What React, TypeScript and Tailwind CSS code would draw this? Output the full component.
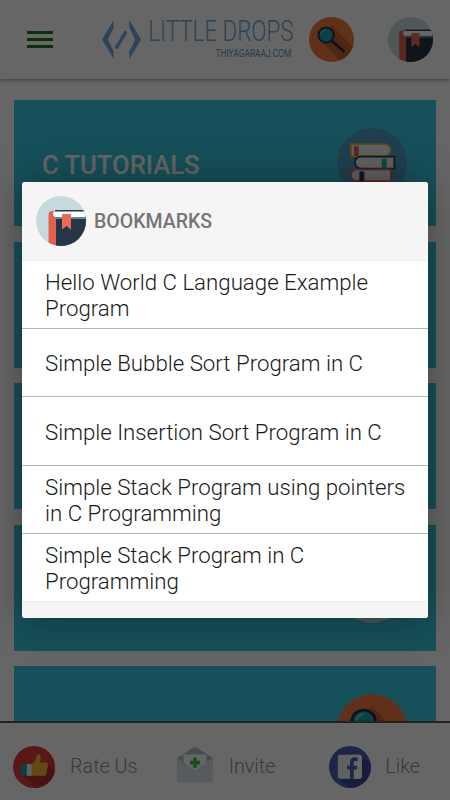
import React from "react";

const rows = [
  "Hello World C Language Example Program",
  "Simple Bubble Sort Program in C",
  "Simple Insertion Sort Program in C",
  "Simple Stack Program using pointers in C Programming",
  "Simple Stack Program in C Programming",
];

const BookIcon: React.FC<{ className?: string }> = ({ className }) => {
  const id = React.useId();
  return (
    <svg viewBox="0 0 100 100" className={className}>
      <clipPath id={id}>
        <circle cx="50" cy="50" r="50" />
      </clipPath>
      <g clipPath={`url(#${id})`}>
        <rect width="100" height="100" fill="#c5d9de" />
        <path d="M25 100V38a8 8 0 0 1 8-8h67v70z" fill="#e2604c" />
        <rect x="40" y="42" width="60" height="58" fill="#233746" />
        <path d="M40 42a6 6 0 0 1 0-12h60v12z" fill="#ffffff" />
        <rect x="38" y="28" width="62" height="3" fill="#233746" />
        <rect x="40" y="42" width="60" height="4" fill="#5b8ba0" />
        <path d="M52 36h18v31l-9-7-9 7z" fill="#ee6a55" />
      </g>
    </svg>
  );
};

const SearchIcon: React.FC<{ className?: string }> = ({ className }) => {
  const id = React.useId();
  return (
    <svg viewBox="0 0 100 100" className={className}>
      <clipPath id={id}>
        <circle cx="50" cy="50" r="50" />
      </clipPath>
      <g clipPath={`url(#${id})`}>
        <rect width="100" height="100" fill="#f07c3e" />
        <path d="M18 45 50 18 100 68V100H72z" fill="#c9602b" />
        <path d="M50 52 77 76" stroke="#1e2a5a" strokeWidth="6" strokeLinecap="round" />
        <circle cx="38" cy="40" r="17" fill="#1ba8a8" stroke="#1e2a5a" strokeWidth="4" />
        <path d="M27 40a11 11 0 0 1 11-11" fill="none" stroke="#7fd6d0" strokeWidth="2" />
      </g>
    </svg>
  );
};

const BooksIcon: React.FC<{ className?: string }> = ({ className }) => (
  <svg viewBox="0 0 100 100" className={className}>
    <circle cx="50" cy="50" r="50" fill="#4f9ec8" />
    <path d="M20 23h48a8 8 0 0 1 0 17H20z" fill="#f0f0f0" stroke="#e8b93c" strokeWidth="2.500" />
    <rect x="24" y="26" width="7" height="14" fill="#e2604c" />
    <path d="M82 41H34a8 8 0 0 0 0 17h48z" fill="#f0f0f0" stroke="#2a3a55" strokeWidth="2.500" />
    <rect x="64" y="44" width="7" height="14" fill="#2aa98f" />
    <path d="M77 59H28a8 8 0 0 0 0 17h49z" fill="#f0f0f0" stroke="#e2604c" strokeWidth="2.500" />
    <rect x="32" y="62" width="7" height="14" fill="#2a3a55" />
  </svg>
);

const ThumbIcon: React.FC<{ className?: string }> = ({ className }) => (
  <svg viewBox="0 0 100 100" className={className}>
    <circle cx="50" cy="50" r="50" fill="#e23b3b" />
    <path d="M50 95 18 68 84 40 100 60A50 50 0 0 1 50 100z" fill="#b82f2f" />
    <rect x="19" y="43" width="14" height="28" fill="#1ba0a8" />
    <rect x="33" y="43" width="12" height="28" fill="#f5f5f5" />
    <path d="M45 43c6-3 10-10 12-22 3-3 9-1 9 6 0 5-2 9-2 12h15c5 0 5 5 4 8l-4 20c-1 3-3 4-6 4H45z" fill="#f5b83d" />
  </svg>
);

const MailIcon: React.FC<{ className?: string }> = ({ className }) => (
  <svg viewBox="0 0 100 100" className={className}>
    <path d="M50 0 100 32V50H0V32z" fill="#a8c0cc" />
    <path d="M18 22H82V78H18z" fill="#ffffff" />
    <path d="M0 32 50 66 100 32V92a8 8 0 0 1-8 8H8a8 8 0 0 1-8-8z" fill="#d8e4ea" />
    <path d="M43 26h14v12h12v14H57v12H43V52H31V38h12z" fill="#3fbf3f" transform="translate(12.500 11) scale(.75)" />
  </svg>
);

const FacebookIcon: React.FC<{ className?: string }> = ({ className }) => {
  const id = React.useId();
  return (
    <svg viewBox="0 0 100 100" className={className}>
      <clipPath id={id}>
        <circle cx="50" cy="50" r="50" />
      </clipPath>
      <g clipPath={`url(#${id})`}>
        <rect width="100" height="100" fill="#4a5fb0" />
        <path d="M78 22 100 44V100H50L22 78z" fill="#3a4c96" />
        <rect x="21" y="21" width="57" height="57" rx="6" fill="#f2f2f2" />
        <rect x="50" y="21" width="28" height="57" rx="6" fill="#ffffff" />
        <path d="M50 78V56H43V47h7V39c0-8 4-12 11-12h7v9h-5c-3 0-4 1-4 4v7h9l-2 9h-7v22z" fill="#4a5fb0" />
      </g>
    </svg>
  );
};

const Logo: React.FC = () => (
  <div className="flex items-start">
    <svg viewBox="0 0 42 42" className="h-[41px] w-[41px] shrink-0">
      <path d="M13 1 1 21 13 41V33L7 21 13 9z" fill="#6fa8dc" />
      <path d="M29 1 41 21 29 41V33L35 21 29 9z" fill="#6fa8dc" />
      <path d="M16 29 25 14" stroke="#6fa8dc" strokeWidth="3.500" strokeLinecap="round" />
    </svg>
    <div className="ml-[8px] flex w-[143px] flex-col items-end -mt-[2px]">
      <span className="origin-right scale-x-[0.77] whitespace-nowrap text-[29px] font-light leading-[29px] text-[#6fa8dc]">
        LITTLE DROPS
      </span>
      <span className="mt-[2px] origin-right scale-x-[0.8] whitespace-nowrap pr-[2px] text-[10.500px] leading-[11px] text-[#5b8fbc]">
        THIYAGARAAJ.COM
      </span>
    </div>
  </div>
);

const Card: React.FC<{ title?: string; children: React.ReactNode }> = ({ title, children }) => (
  <div className="flex h-[126px] shrink-0 items-center justify-between bg-[#39c8e1] pl-[28px] pr-[29px]">
    <span className="pt-[4px] text-[25.600px] font-medium text-white">{title}</span>
    {children}
  </div>
);

const FooterItem: React.FC<{ label: string; className?: string; icon: React.ReactNode }> = ({ label, className, icon }) => (
  <div className={`flex items-center ${className ?? ""}`}>
    {icon}
    <span className="text-[19.800px] font-light text-[#8f8f8f]">{label}</span>
  </div>
);

export default function App() {
  return (
    <div className="relative flex h-[800px] w-[450px] flex-col overflow-hidden bg-white font-['Roboto',sans-serif]">
      <header className="z-10 flex h-[79px] shrink-0 items-center bg-white pl-[27px] shadow-[0_1px_4px_rgba(0,0,0,0.4)]">
        <div className="flex w-[26px] shrink-0 flex-col gap-[4px]">
          <div className="h-[3px] bg-[#1a7a1a]" />
          <div className="h-[3px] bg-[#1a7a1a]" />
          <div className="h-[3px] bg-[#1a7a1a]" />
        </div>
        <div className="ml-[48px] shrink-0">
          <Logo />
        </div>
        <SearchIcon className="ml-[16px] h-[45px] w-[45px] shrink-0" />
        <BookIcon className="ml-[34px] h-[45px] w-[45px] shrink-0" />
      </header>

      <main className="flex flex-1 flex-col gap-[15.500px] overflow-hidden px-[14px] pt-[21px]">
        <Card title="C TUTORIALS">
          <BooksIcon className="h-[70px] w-[70px]" />
        </Card>
        <Card>
          <div className="h-[70px] w-[70px] rounded-full bg-[#4f9ec8]" />
        </Card>
        <Card>
          <div className="h-[70px] w-[70px] rounded-full bg-[#4f9ec8]" />
        </Card>
        <Card>
          <div className="h-[70px] w-[70px] rounded-full bg-[#c5d9de]" />
        </Card>
        <Card>
          <SearchIcon className="h-[70px] w-[70px]" />
        </Card>
      </main>

      <footer className="z-10 flex h-[79px] shrink-0 items-center border-t-2 border-[#555555] bg-white pl-[13px] pt-[10px]">
        <FooterItem label="Rate Us" className="gap-[15px]" icon={<ThumbIcon className="h-[42px] w-[42px]" />} />
        <FooterItem label="Invite" className="ml-[39px] gap-[16px]" icon={<MailIcon className="mb-[5px] h-[37px] w-[36px]" />} />
        <FooterItem label="Like" className="ml-[54px] gap-[14px]" icon={<FacebookIcon className="h-[42px] w-[42px]" />} />
      </footer>

      <div className="absolute inset-0 z-20 flex items-center justify-center bg-black/60">
        <div className="w-[406px] overflow-hidden rounded-[3px] bg-white shadow-[0_0_40px_rgba(0,0,0,0.35)]">
          <div className="flex h-[79px] items-center gap-[8px] border-b border-[#eeeeee] bg-[#f5f5f5] pl-[14px]">
            <BookIcon className="h-[50px] w-[50px]" />
            <span className="pt-[1px] text-[19.500px] font-medium text-[#757575]">BOOKMARKS</span>
          </div>
          {rows.map((row, i) => (
            <div
              key={row}
              className={`flex h-[68.200px] items-center border-b pl-[23px] pr-[12px] pt-[1px] text-[22.250px] font-light leading-[26px] text-[#1a1a1a] ${i === 4 ? "border-[#eeeeee]" : "border-[#b5b5b5]"}`}
            >
              {row}
            </div>
          ))}
          <div className="h-[16px] bg-[#f5f5f5]" />
        </div>
      </div>
    </div>
  );
}
